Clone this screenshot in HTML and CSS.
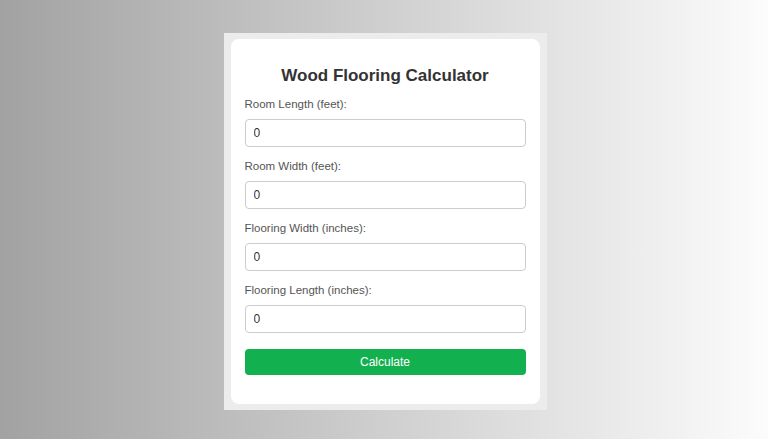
FILE: index.html
```html
<!DOCTYPE html>
<html lang="en">
<head>
    <meta charset="UTF-8">
    <meta name="viewport" content="width=device-width, initial-scale=1.0">
    <title>Wood Flooring Calculator</title>
    <link rel="stylesheet" href="styles.css">
</head>
<body>
    <div class="frame">
        <div class="calculator">
            <h2>Wood Flooring Calculator</h2>

            <label for="roomLength">Room Length (feet):</label>
            <input type="number" id="roomLength" value="0">

            <label for="roomWidth">Room Width (feet):</label>
            <input type="number" id="roomWidth" value="0">

            <label for="floorWidth">Flooring Width (inches):</label>
            <input type="number" id="floorWidth" value="0">

            <label for="floorLength">Flooring Length (inches):</label>
            <input type="number" id="floorLength" value="0">

            <button onclick="calculate()">Calculate</button>
        </div>
    </div>
</body>
</html>
```

FILE: styles.css
```css
body {
    font-family: 'Liberation Sans', Arial, sans-serif;
    background: linear-gradient(to right, #a2a2a2, #fcfcfc);
    margin: 0;
    padding: 0;
    height: 100vh;
    display: flex;
    align-items: center;
    justify-content: center;
}

.frame {
    background-color: #ececec;
    padding: 6px 7px;
    margin: 3px 0 0 2px;
}

.calculator {
    width: 281px;
    background-color: #fff;
    border-radius: 8px;
    padding: 12px 14px 29px 14px;
    display: flex;
    flex-direction: column;
}

h2 {
    text-align: center;
    color: #333;
    font-size: 17px;
    line-height: 22px;
    margin: 14px 0 9px 0;
}

label {
    font-size: 11.5px;
    line-height: 16px;
    color: #555;
    margin-bottom: 7px;
}

input[type="number"] {
    box-sizing: border-box;
    width: 100%;
    height: 28px;
    padding: 0 8px;
    border: 1px solid #ccc;
    border-radius: 4px;
    font-family: inherit;
    font-size: 12px;
    color: #333;
    margin: 0 0 11px 0;
}

button {
    height: 26px;
    margin-top: 5px;
    border: none;
    border-radius: 4px;
    background-color: #12b04f;
    color: #fff;
    font-family: inherit;
    font-size: 12px;
    cursor: pointer;
}
```
